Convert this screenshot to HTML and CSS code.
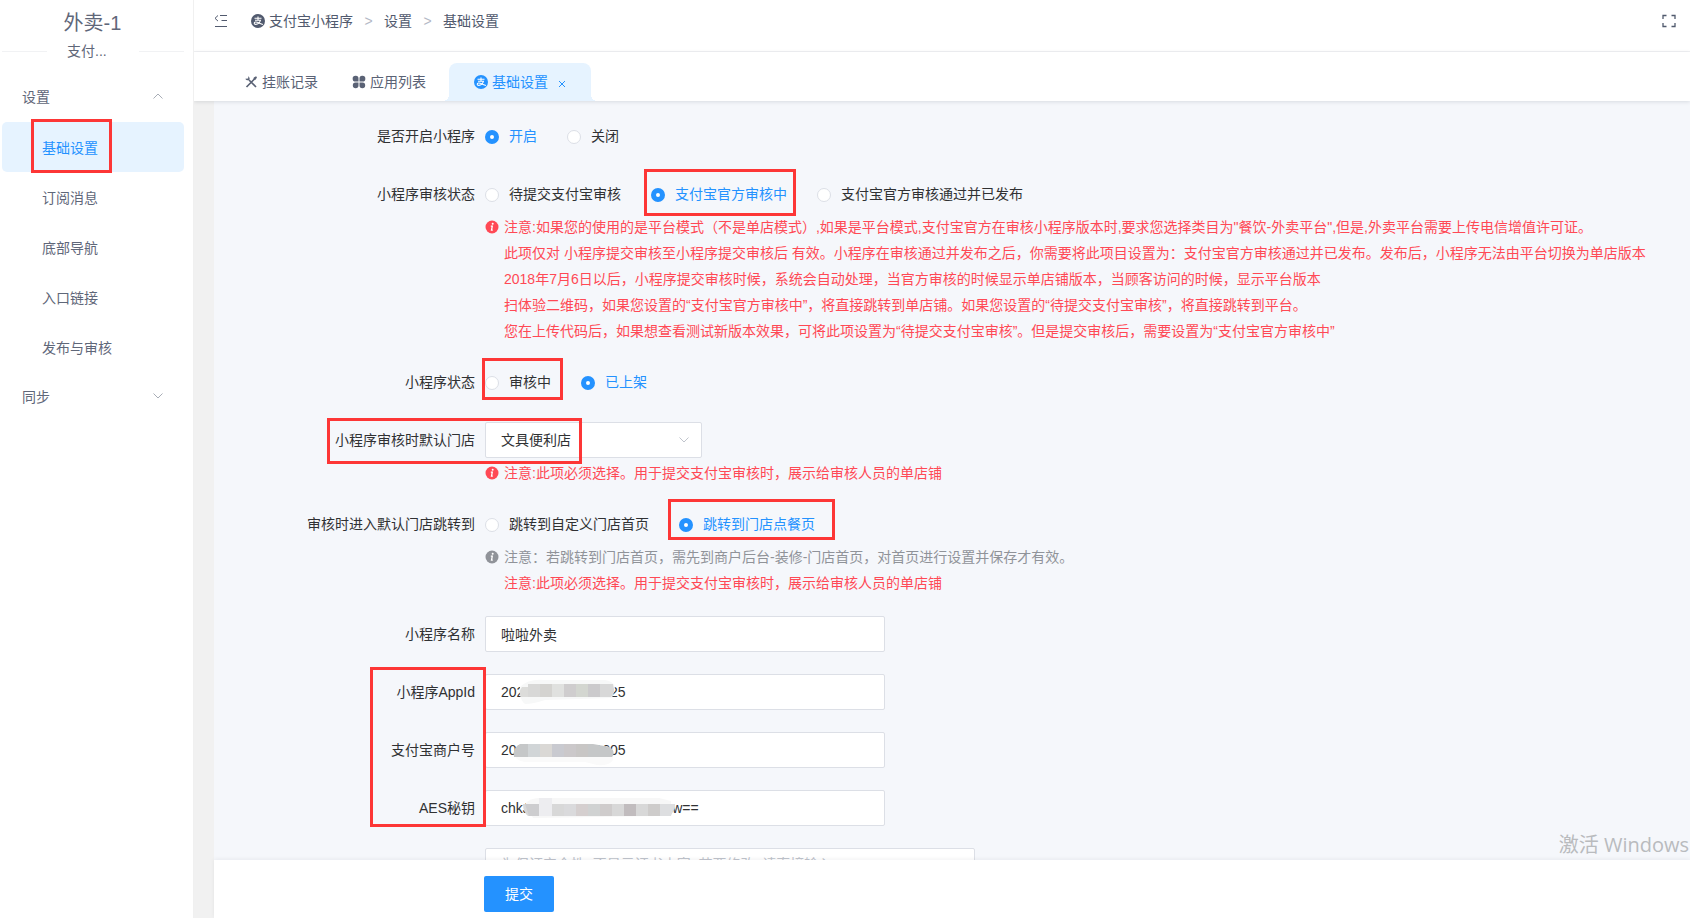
FILE: index.html
```html
<!DOCTYPE html>
<html lang="zh-CN">
<head>
<meta charset="utf-8">
<title>基础设置</title>
<link rel="stylesheet" href="styles.css">
</head>
<body>
<svg class="defs" aria-hidden="true">
  <symbol id="alipay" viewBox="0 0 14 14">
    <circle cx="7" cy="7" r="7" fill="currentColor"/>
    <path d="M3.500 4.300h7M7 2.500v3.500M4 6.200h5.500C8.800 8.400 7 10.400 4.800 10.400C2.700 10.400 2.700 8.100 4.600 8C6.600 7.900 8.600 9.500 11.900 10.600" fill="none" stroke="#fff" stroke-width="1.100"/>
  </symbol>
  <symbol id="info" viewBox="0 0 14 14">
    <circle cx="7" cy="7" r="6.500" fill="currentColor"/>
    <circle cx="7.700" cy="3.800" r="1" fill="#fff"/>
    <path d="M5.800 6.200h1.500L6.500 10.200h1.300" fill="none" stroke="#fff" stroke-width="1.300"/>
  </symbol>
</svg>
<div class="app">
  <aside class="sidebar">
    <h1 class="brand">外卖-1</h1>
    <div class="divider"><span>支付...</span></div>
    <nav class="menu">
      <button type="button" class="menu-group">设置
        <svg class="arrow" viewBox="0 0 10 6"><path d="M.5 5.500 5 1l4.500 4.500"/></svg>
      </button>
      <a class="menu-item active mark mark-menu" href="#">基础设置</a>
      <a class="menu-item" href="#">订阅消息</a>
      <a class="menu-item" href="#">底部导航</a>
      <a class="menu-item" href="#">入口链接</a>
      <a class="menu-item" href="#">发布与审核</a>
      <button type="button" class="menu-group">同步
        <svg class="arrow" viewBox="0 0 10 6"><path d="M.5.5 5 5 9.500.5"/></svg>
      </button>
    </nav>
  </aside>

  <div class="page">
    <header class="topbar">
      <button type="button" class="icon-btn" aria-label="收起菜单">
        <svg width="14" height="14" viewBox="0 0 14 14"><path d="M6 1.500h7M7.500 6.500H13M1 12.500h12M4 1.500 1 4.300l3 2.800" fill="none" stroke="currentColor"/></svg>
      </button>
      <nav class="crumbs">
        <a href="#"><svg class="ico" aria-hidden="true"><use href="#alipay"/></svg>支付宝小程序</a>
        <span class="sep">&gt;</span>
        <a href="#">设置</a>
        <span class="sep">&gt;</span>
        <a href="#">基础设置</a>
      </nav>
      <button type="button" class="icon-btn full" aria-label="全屏">
        <svg width="14" height="14" viewBox="0 0 14 14"><path d="M1 5V1.500h3.500M9.500 1.500H13V5M13 9v3.500H9.500M4.500 12.500H1V9" fill="none" stroke="currentColor" stroke-width="1.300"/></svg>
      </button>
    </header>

    <nav class="tabs">
      <a class="tab" href="#">
        <svg class="ico" viewBox="0 0 14 14" aria-hidden="true"><path d="M2.500 12 11 3.500M5 5l7 7" fill="none" stroke="currentColor" stroke-width="1.700"/><path d="M1.300 3.800c1 1.600 2.600 1.900 3.700 1.200S5.800 2.300 4.300 1.200L4.200 3.500ZM9.300 4.800 9.800 2.500 12 1.200l1 1-1.200 2.300Z" fill="currentColor"/></svg>挂账记录</a>
      <a class="tab" href="#">
        <svg class="ico" viewBox="0 0 14 14" aria-hidden="true"><path d="M3.500.8A2.800 2.800 0 0 1 6.500 3.600V6.500H3.500A2.850 2.850 0 0 1 3.500.8ZM10.500.8A2.850 2.850 0 0 1 10.500 6.500H7.500V3.600A2.800 2.800 0 0 1 10.500.8ZM3.500 7.500H6.500V10.400A2.850 2.850 0 1 1 3.500 7.500ZM7.500 7.500h3A2.850 2.850 0 1 1 7.500 10.400Z" fill="currentColor"/></svg>应用列表</a>
      <a class="tab current" href="#">
        <svg class="ico" aria-hidden="true"><use href="#alipay"/></svg>基础设置
        <svg class="close" viewBox="0 0 8 8" aria-hidden="true"><path d="m1 1 6 6M7 1 1 7" fill="none" stroke="currentColor"/></svg>
      </a>
    </nav>

    <form class="form">
      <div class="fields">
        <div class="row">
          <span class="label" id="l1">是否开启小程序</span>
          <div class="radios" role="radiogroup" aria-labelledby="l1">
            <label class="radio"><input type="radio" name="open" checked><span>开启</span></label>
            <label class="radio"><input type="radio" name="open"><span>关闭</span></label>
          </div>
        </div>

        <div class="row has-notes">
          <span class="label" id="l2">小程序审核状态</span>
          <div>
            <div class="radios" role="radiogroup" aria-labelledby="l2">
              <label class="radio"><input type="radio" name="audit"><span>待提交支付宝审核</span></label>
              <label class="radio mark mark-audit"><input type="radio" name="audit" checked><span>支付宝官方审核中</span></label>
              <label class="radio"><input type="radio" name="audit"><span>支付宝官方审核通过并已发布</span></label>
            </div>
            <div class="notes">
              <svg class="info" aria-hidden="true"><use href="#info"/></svg>
              <div>
                <p>注意:如果您的使用的是平台模式（不是单店模式）,如果是平台模式,支付宝官方在审核小程序版本时,要求您选择类目为"餐饮-外卖平台",但是,外卖平台需要上传电信增值许可证。</p>
                <p>此项仅对 小程序提交审核至小程序提交审核后 有效。小程序在审核通过并发布之后，你需要将此项目设置为：支付宝官方审核通过并已发布。发布后，小程序无法由平台切换为单店版本</p>
                <p>2018年7月6日以后，小程序提交审核时候，系统会自动处理，当官方审核的时候显示单店铺版本，当顾客访问的时候，显示平台版本</p>
                <p>扫体验二维码，如果您设置的“支付宝官方审核中”，将直接跳转到单店铺。如果您设置的“待提交支付宝审核”，将直接跳转到平台。</p>
                <p>您在上传代码后，如果想查看测试新版本效果，可将此项设置为“待提交支付宝审核”。但是提交审核后，需要设置为“支付宝官方审核中”</p>
              </div>
            </div>
          </div>
        </div>

        <div class="row">
          <span class="label" id="l3">小程序状态</span>
          <div class="radios" role="radiogroup" aria-labelledby="l3">
            <label class="radio mark mark-status"><input type="radio" name="status"><span>审核中</span></label>
            <label class="radio"><input type="radio" name="status" checked><span>已上架</span></label>
          </div>
        </div>

        <div class="row has-notes mark mark-shop">
          <label class="label" for="shop">小程序审核时默认门店</label>
          <div>
            <div class="select">
              <select id="shop"><option>文具便利店</option></select>
              <svg class="arrow" viewBox="0 0 10 6" aria-hidden="true"><path d="M.5.5 5 5 9.500.5"/></svg>
            </div>
            <div class="notes">
              <svg class="info" aria-hidden="true"><use href="#info"/></svg>
              <p>注意:此项必须选择。用于提交支付宝审核时，展示给审核人员的单店铺</p>
            </div>
          </div>
        </div>

        <div class="row has-notes">
          <span class="label" id="l5">审核时进入默认门店跳转到</span>
          <div>
            <div class="radios" role="radiogroup" aria-labelledby="l5">
              <label class="radio"><input type="radio" name="jump"><span>跳转到自定义门店首页</span></label>
              <label class="radio mark mark-jump"><input type="radio" name="jump" checked><span>跳转到门店点餐页</span></label>
            </div>
            <div class="notes muted">
              <svg class="info" aria-hidden="true"><use href="#info"/></svg>
              <div>
                <p>注意：若跳转到门店首页，需先到商户后台-装修-门店首页，对首页进行设置并保存才有效。</p>
                <p class="warn">注意:此项必须选择。用于提交支付宝审核时，展示给审核人员的单店铺</p>
              </div>
            </div>
          </div>
        </div>

        <div class="row">
          <label class="label" for="name">小程序名称</label>
          <div class="control"><input class="text" id="name" type="text" value="啦啦外卖"></div>
        </div>

        <div class="mark mark-keys">
          <div class="row">
            <label class="label" for="appid">小程序AppId</label>
            <div class="control">
              <input class="text" id="appid" type="text" value="2021000000000025">
              <svg class="mask" width="220" height="36" viewBox="0 0 220 36" aria-hidden="true">
                <path d="M35 13Q44 4 60 6H120Q129 7 130 14L127 24 60 26Q48 30 40 30Q35 26 35 18Z" fill="#f7f8f8"/>
                <path d="M37 13H128Q131 18 126 23H36Q33 18 37 13Z" fill="#dcdcda"/>
                <path d="M43 10h12v13H43z" fill="#d8d8d7"/><path d="M55 10h12v13H55z" fill="#d4d3d0"/><path d="M67 10h12v13H67z" fill="#e0e1df"/><path d="M79 10h12v13H79z" fill="#cfcdce"/><path d="M91 10h12v13H91z" fill="#d3d6d0"/><path d="M103 10h12v13h-12z" fill="#cbcacc"/><path d="M115 10h13l1 6-3 7h-11z" fill="#d8d8d8"/>
              </svg>
            </div>
          </div>
          <div class="row">
            <label class="label" for="merchant">支付宝商户号</label>
            <div class="control">
              <input class="text" id="merchant" type="text" value="2088000000001605">
              <svg class="mask" width="220" height="36" viewBox="0 0 220 36" aria-hidden="true">
                <path d="M30 17H128V28Q125 34 112 33L100 30H40Q32 29 30 24Z" fill="#fafafa"/>
                <path d="M35 12H108L125 15Q131 20 127 25H29Q27 16 35 12Z" fill="#c5c7c8"/>
                <path d="M43 12h12v13H43z" fill="#d1d5d7"/><path d="M55 12h12v13H55z" fill="#dad8d5"/><path d="M67 12h12v13H67z" fill="#c9cad0"/><path d="M79 12h12v13H79z" fill="#cbc8ca"/><path d="M91 12h12v13H91z" fill="#c8c6c5"/>
              </svg>
            </div>
          </div>
          <div class="row">
            <label class="label" for="aes">AES秘钥</label>
            <div class="control">
              <input class="text" id="aes" type="text" value="chkJ00000000000000000Cw==">
              <svg class="mask" width="220" height="36" viewBox="0 0 220 36" aria-hidden="true">
                <path d="M40 14Q45 8 54 8H174L186 11V22L176 26 48 28Z" fill="#f7f7f7"/>
                <path d="M38 14H190Q190 22 184 26H43Q38 22 38 14Z" fill="#d8d8d8"/>
                <path d="M40 14h14v12H44z" fill="#cdcdcf"/><path d="M54 8h13v18H54z" fill="#ededf0"/><path d="M79 14h12v12H79z" fill="#dadadc"/><path d="M91 14h12v12H91z" fill="#d5cfcf"/><path d="M103 14h12v12h-12z" fill="#d0d2d2"/><path d="M115 14h12v12h-12z" fill="#cfcccc"/><path d="M139 14h12v12h-12z" fill="#c1bcbe"/><path d="M163 14h12v12h-12z" fill="#cecccb"/><path d="M175 14h15l-4 12h-11z" fill="#dddee0"/>
              </svg>
            </div>
          </div>
        </div>

        <div class="row">
          <span class="label"></span>
          <textarea class="text area" rows="4" aria-label="证书内容" placeholder="为保证安全性, 不显示证书内容, 若要修改, 请直接输入"></textarea>
        </div>
      </div>

      <div class="watermark">激活 Windows</div>
      <footer class="actions"><button type="submit" class="submit">提交</button></footer>
    </form>
  </div>
</div>
</body>
</html>
```
FILE: styles.css
```css
*, *::before, *::after { box-sizing: border-box; }

body {
  margin: 0;
  font: 14px/20px "Liberation Sans", "Noto Sans CJK SC", sans-serif;
  color: #303133;
  background: #fff;
  text-spacing-trim: space-all;
}

h1, p { margin: 0; }
a { color: inherit; text-decoration: none; }
button { font: inherit; color: inherit; border: 0; background: none; padding: 0; cursor: pointer; }
.defs { position: absolute; width: 0; height: 0; }

.app { display: flex; height: 100vh; overflow: hidden; }

/* Sidebar */
.sidebar {
  position: relative;
  z-index: 2;
  flex: 0 0 194px;
  color: #5f6779;
  background: #fff;
  border-right: 1px solid #f0f0f0;
}
.brand {
  padding: 11px 8px 6px 0;
  font-size: 20px;
  line-height: 24px;
  font-weight: 400;
  text-align: center;
}
.divider {
  display: flex;
  align-items: center;
  gap: 20px;
  margin: 0 9px 11px 2px;
}
.divider::before, .divider::after { content: ""; flex: 0 0 45px; height: 1px; background: #f1f2f4; }
.divider::after { margin-left: auto; }
.menu { display: flex; flex-direction: column; padding-right: 9px; }
.menu-group {
  display: flex;
  align-items: center;
  justify-content: space-between;
  height: 50px;
  padding: 0 21px 0 22px;
  text-align: left;
}
.menu-group .arrow { margin-bottom: 2px; }
.menu-item { height: 50px; margin-left: 2px; padding: 1px 0 0 40px; line-height: 50px; border-radius: 5px; }
.menu-item.active { color: #2492ff; background: #e6f3ff; }
.arrow { width: 10px; height: 6px; fill: none; stroke: #a8adb6; overflow: visible; }

/* Header */
.page { flex: 1; min-width: 0; display: flex; flex-direction: column; overflow: hidden; }
.topbar {
  display: flex;
  align-items: center;
  height: 52px;
  padding: 0 14px 10px 20px;
  color: #515a6e;
  border-bottom: 1px solid #f1f2f4;
}
.icon-btn { display: flex; }
.full { margin-left: auto; }
.crumbs { display: flex; align-items: center; margin-left: 23px; }
.crumbs a, .tab { display: flex; align-items: center; }
.ico { width: 14px; height: 14px; margin-right: 4px; }
.sep { width: 31px; text-align: center; color: #b4b9c6; }

.tabs {
  position: relative;
  z-index: 1;
  display: flex;
  align-items: flex-end;
  height: 49px;
  padding-left: 50px;
  color: #5a6275;
  background: #fff;
  box-shadow: 0 1px 4px rgba(0, 21, 41, .12);
}
.tab { height: 38px; margin-right: 34px; }
.tab.current {
  position: relative;
  margin: 0 0 0 -11px;
  padding: 0 25px;
  color: #2492ff;
  background: #e6f3ff;
  border-radius: 8px 8px 0 0;
}
.tab.current::before, .tab.current::after {
  content: "";
  position: absolute;
  bottom: 0;
  width: 6px;
  height: 6px;
}
.tab.current::before { left: -6px; background: radial-gradient(circle at 0 0, transparent 6px, #e6f3ff 6px); }
.tab.current::after { right: -6px; background: radial-gradient(circle at 100% 0, transparent 6px, #e6f3ff 6px); }
.close { width: 8px; height: 8px; margin: 3px 0 0 10px; }

/* Form */
.form {
  position: relative;
  flex: 1;
  min-height: 0;
  display: flex;
  flex-direction: column;
  border-left: 20px solid #f1f1f1;
  background: #f5f7fb;
}
.fields { flex: 1; min-height: 0; overflow: hidden; padding-top: 17px; }
.row {
  display: grid;
  grid-template-columns: 261px minmax(0, 1fr);
  column-gap: 10px;
  margin-bottom: 22px;
}
.row.has-notes { margin-bottom: 20px; }
.label { text-align: right; line-height: 36px; }
.radios { display: flex; gap: 30px; height: 36px; }
.radio { display: flex; align-items: center; gap: 10px; }
.radio input {
  appearance: none;
  width: 14px;
  height: 14px;
  margin: 2px 0 0;
  border: 1px solid #dcdfe6;
  border-radius: 50%;
  background: #fff;
}
.radio input:checked { border: 5px solid #2492ff; }
.radio input:checked + span { color: #2492ff; }

.notes {
  display: flex;
  gap: 5px;
  margin-top: 2px;
  line-height: 26px;
  white-space: nowrap;
  color: #ff4955;
}
.muted { color: #909399; }
.warn { color: #ff4955; }
.info { flex: none; width: 14px; height: 14px; margin-top: 6px; }

.control { position: relative; width: 400px; }
.text, .select select {
  display: block;
  width: 100%;
  height: 36px;
  padding: 0 15px;
  font: inherit;
  color: #303133;
  border: 1px solid #dcdfe6;
  border-radius: 2px;
  background: #fff;
}
.text.area { width: 490px; height: 96px; padding-top: 5px; resize: none; }
.text::placeholder { color: #c0c4cc; }
.select { position: relative; width: 217px; }
.select select { appearance: none; }
.select .arrow { position: absolute; right: 13px; top: 15px; stroke: #c0c4cc; pointer-events: none; }
.mask { position: absolute; left: 0; top: 0; pointer-events: none; }

/* Highlight frames */
.mark { position: relative; }
.mark::after { content: ""; position: absolute; border: 3px solid #fd3636; pointer-events: none; }
.mark-menu::after { left: 29px; width: 81px; top: -3px; bottom: -1px; }
.mark-audit::after { inset: -7px -9px -4px -7px; }
.mark-status::after { inset: -6px -12px 0 -3px; }
.mark-shop::after { left: 113px; top: -4px; width: 255px; height: 46px; }
.mark-jump::after { inset: -7px -20px 2px -11px; }
.mark-keys::after { left: 156px; top: -7px; width: 116px; height: 160px; }

.watermark {
  position: absolute;
  right: 1px;
  bottom: 60px;
  font: 20px/26px "Open Sans", "Noto Sans CJK SC", sans-serif;
  color: #b9bbbe;
}
.actions {
  padding: 16px 0 6px 270px;
  background: #fff;
  box-shadow: 0 -1px 4px rgba(0, 21, 41, .06);
}
.submit { width: 70px; height: 36px; color: #fff; background: #2492ff; border-radius: 2px; }
```
